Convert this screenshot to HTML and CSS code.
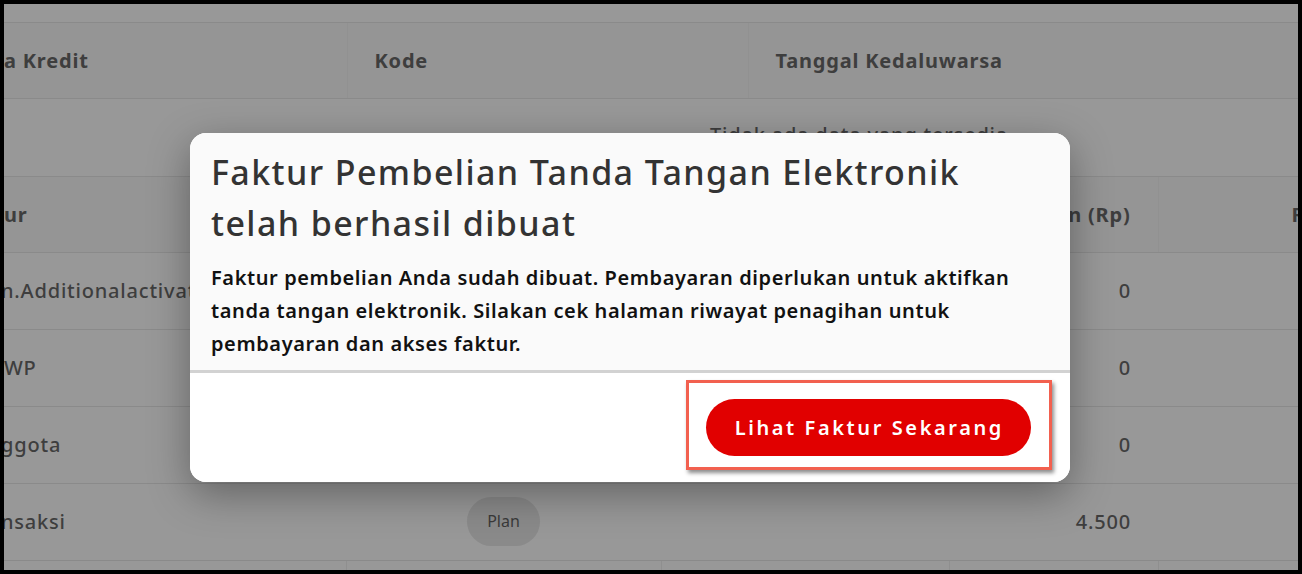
FILE: index.html
```html
<!DOCTYPE html>
<html lang="id">
<head>
  <meta charset="UTF-8">
  <meta name="viewport" content="width=device-width, initial-scale=1.0">
  <title>Faktur Tanda Tangan Elektronik</title>
  <link rel="stylesheet" href="styles.css">
</head>
<body>
  <div class="frame">
    <table class="grid grid-credit">
      <colgroup>
        <col class="c-name">
        <col class="c-code">
        <col class="c-date">
      </colgroup>
      <thead>
        <tr>
          <th>a Kredit</th>
          <th class="pad">Kode</th>
          <th class="pad">Tanggal Kedaluwarsa</th>
        </tr>
      </thead>
      <tbody>
        <tr>
          <td colspan="3" class="empty">Tidak ada data yang tersedia</td>
        </tr>
      </tbody>
    </table>

    <table class="grid grid-items">
      <colgroup>
        <col class="c1">
        <col class="c2">
        <col class="c3">
        <col class="c4">
        <col class="c5">
      </colgroup>
      <thead>
        <tr>
          <th>ur</th>
          <th></th>
          <th></th>
          <th class="num">n (Rp)</th>
          <th class="num">Rp</th>
        </tr>
      </thead>
      <tbody>
        <tr>
          <td class="cut">n.Additionalactivation</td>
          <td></td><td></td>
          <td class="num">0</td><td></td>
        </tr>
        <tr>
          <td>WP</td>
          <td></td><td></td>
          <td class="num">0</td><td></td>
        </tr>
        <tr>
          <td class="cut">ggota</td>
          <td></td><td></td>
          <td class="num">0</td><td></td>
        </tr>
        <tr>
          <td class="cut">nsaksi</td>
          <td class="mid"><span class="pill">Plan</span></td>
          <td></td>
          <td class="num">4.500</td><td></td>
        </tr>
        <tr class="last">
          <td></td><td></td><td></td><td></td><td></td>
        </tr>
      </tbody>
    </table>

    <div class="modal">
      <div class="modal-body">
        <h2>Faktur Pembelian Tanda Tangan Elektronik telah berhasil dibuat</h2>
        <p>Faktur pembelian Anda sudah dibuat. Pembayaran diperlukan untuk aktifkan tanda tangan elektronik. Silakan cek halaman riwayat penagihan untuk pembayaran dan akses faktur.</p>
      </div>
      <div class="modal-footer">
        <div class="cta">
          <button class="btn">Lihat Faktur Sekarang</button>
          <span class="mark"></span>
        </div>
      </div>
    </div>
  </div>
</body>
</html>
```

FILE: styles.css
```css
:root {
  --backdrop: #989898;
  --head: #959595;
  --line: #8a8a8a;
  --muted-text: #3e3e3e;
  --red: #e10000;
  --mark: #f2604f;
}
* { box-sizing: border-box; }
body {
  margin: 0;
  background: #000;
  font-family: "Noto Sans", sans-serif;
}
.frame {
  position: relative;
  width: 1294px;
  height: 566px;
  margin: 4px;
  overflow: hidden;
  background: var(--backdrop);
}

/* background tables (dimmed by the dialog) */
.grid {
  width: 1294px;
  border-collapse: collapse;
  table-layout: fixed;
  color: var(--muted-text);
  font-size: 20px;
  letter-spacing: 0.8px;
}
.grid th {
  height: 76px;
  text-align: left;
  font-weight: 700;
  background: var(--head);
  border-top: 1px solid var(--line);
  border-bottom: 1px solid var(--line);
  padding: 0;
}
.grid td {
  height: 77px;
  padding: 0;
  border-bottom: 1px solid var(--line);
  font-weight: 500;
}
.grid-credit { margin-top: 18px; }
.grid-credit .c-name { width: 343px; }
.grid-credit .c-code { width: 401px; }
.grid-credit th + th { border-left: 1px solid #919191; }
.grid-credit .pad { padding-left: 27px; }
.grid-credit .empty {
  padding-left: 706px;
  vertical-align: top;
  padding-top: 22px;
  border-bottom: none;
}

.grid-items .c1 { width: 342px; }
.grid-items .c2 { width: 315px; }
.grid-items .c3 { width: 288px; }
.grid-items .c4 { width: 209px; }
.grid-items th:nth-child(5) { border-left: 1px solid #919191; }
.grid-items .num {
  text-align: right;
  padding-right: 27px;
}
.grid-items th.num:last-child {
  padding-right: 0;
  text-align: left;
  padding-left: 133px;
}
.grid-items .cut { text-indent: -3px; }
.grid-items .mid { text-align: center; }
.grid-items .last td {
  border-bottom: none;
  border-left: 1px solid #8f8f8f;
}
.grid-items .last td:first-child { border-left: none; }
.pill {
  display: inline-block;
  width: 73px;
  line-height: 49px;
  border-radius: 25px;
  background: #8a8a8a;
  color: #3a3a3a;
  font-size: 16px;
  font-weight: 400;
  letter-spacing: 0;
  text-align: center;
}

/* dialog */
.modal {
  position: absolute;
  left: 186px;
  top: 129px;
  width: 880px;
  border-radius: 16px;
  overflow: hidden;
  background: #fff;
  box-shadow: 0 12px 40px rgba(0, 0, 0, 0.35);
}
.modal-body {
  background: #fafafa;
  padding: 14px 21px 10px;
  border-bottom: 3px solid #d2d2d2;
}
.modal-body h2 {
  margin: 0 60px 12px 0;
  font-size: 34px;
  line-height: 51px;
  font-weight: 500;
  color: #333;
  letter-spacing: 1.4px;
}
.modal-body p {
  margin: 0;
  font-size: 20px;
  line-height: 33px;
  font-weight: 600;
  color: #111;
  letter-spacing: 0.6px;
}
.modal-footer {
  display: flex;
  justify-content: flex-end;
  padding: 26px 39px 26px 21px;
  background: #fff;
}
.cta { position: relative; }
.btn {
  display: block;
  height: 57px;
  padding: 0 27px 0 29px;
  border: none;
  border-radius: 29px;
  background: var(--red);
  color: #fff;
  font-family: inherit;
  font-size: 20px;
  font-weight: 600;
  letter-spacing: 2.6px;
  cursor: pointer;
}
/* annotation box drawn over the button */
.mark {
  position: absolute;
  left: -20px;
  right: -21px;
  top: -19px;
  bottom: -14px;
  border: 3px solid var(--mark);
  box-shadow: 2px 3px 4px rgba(0, 0, 0, 0.45);
  pointer-events: none;
}
```
